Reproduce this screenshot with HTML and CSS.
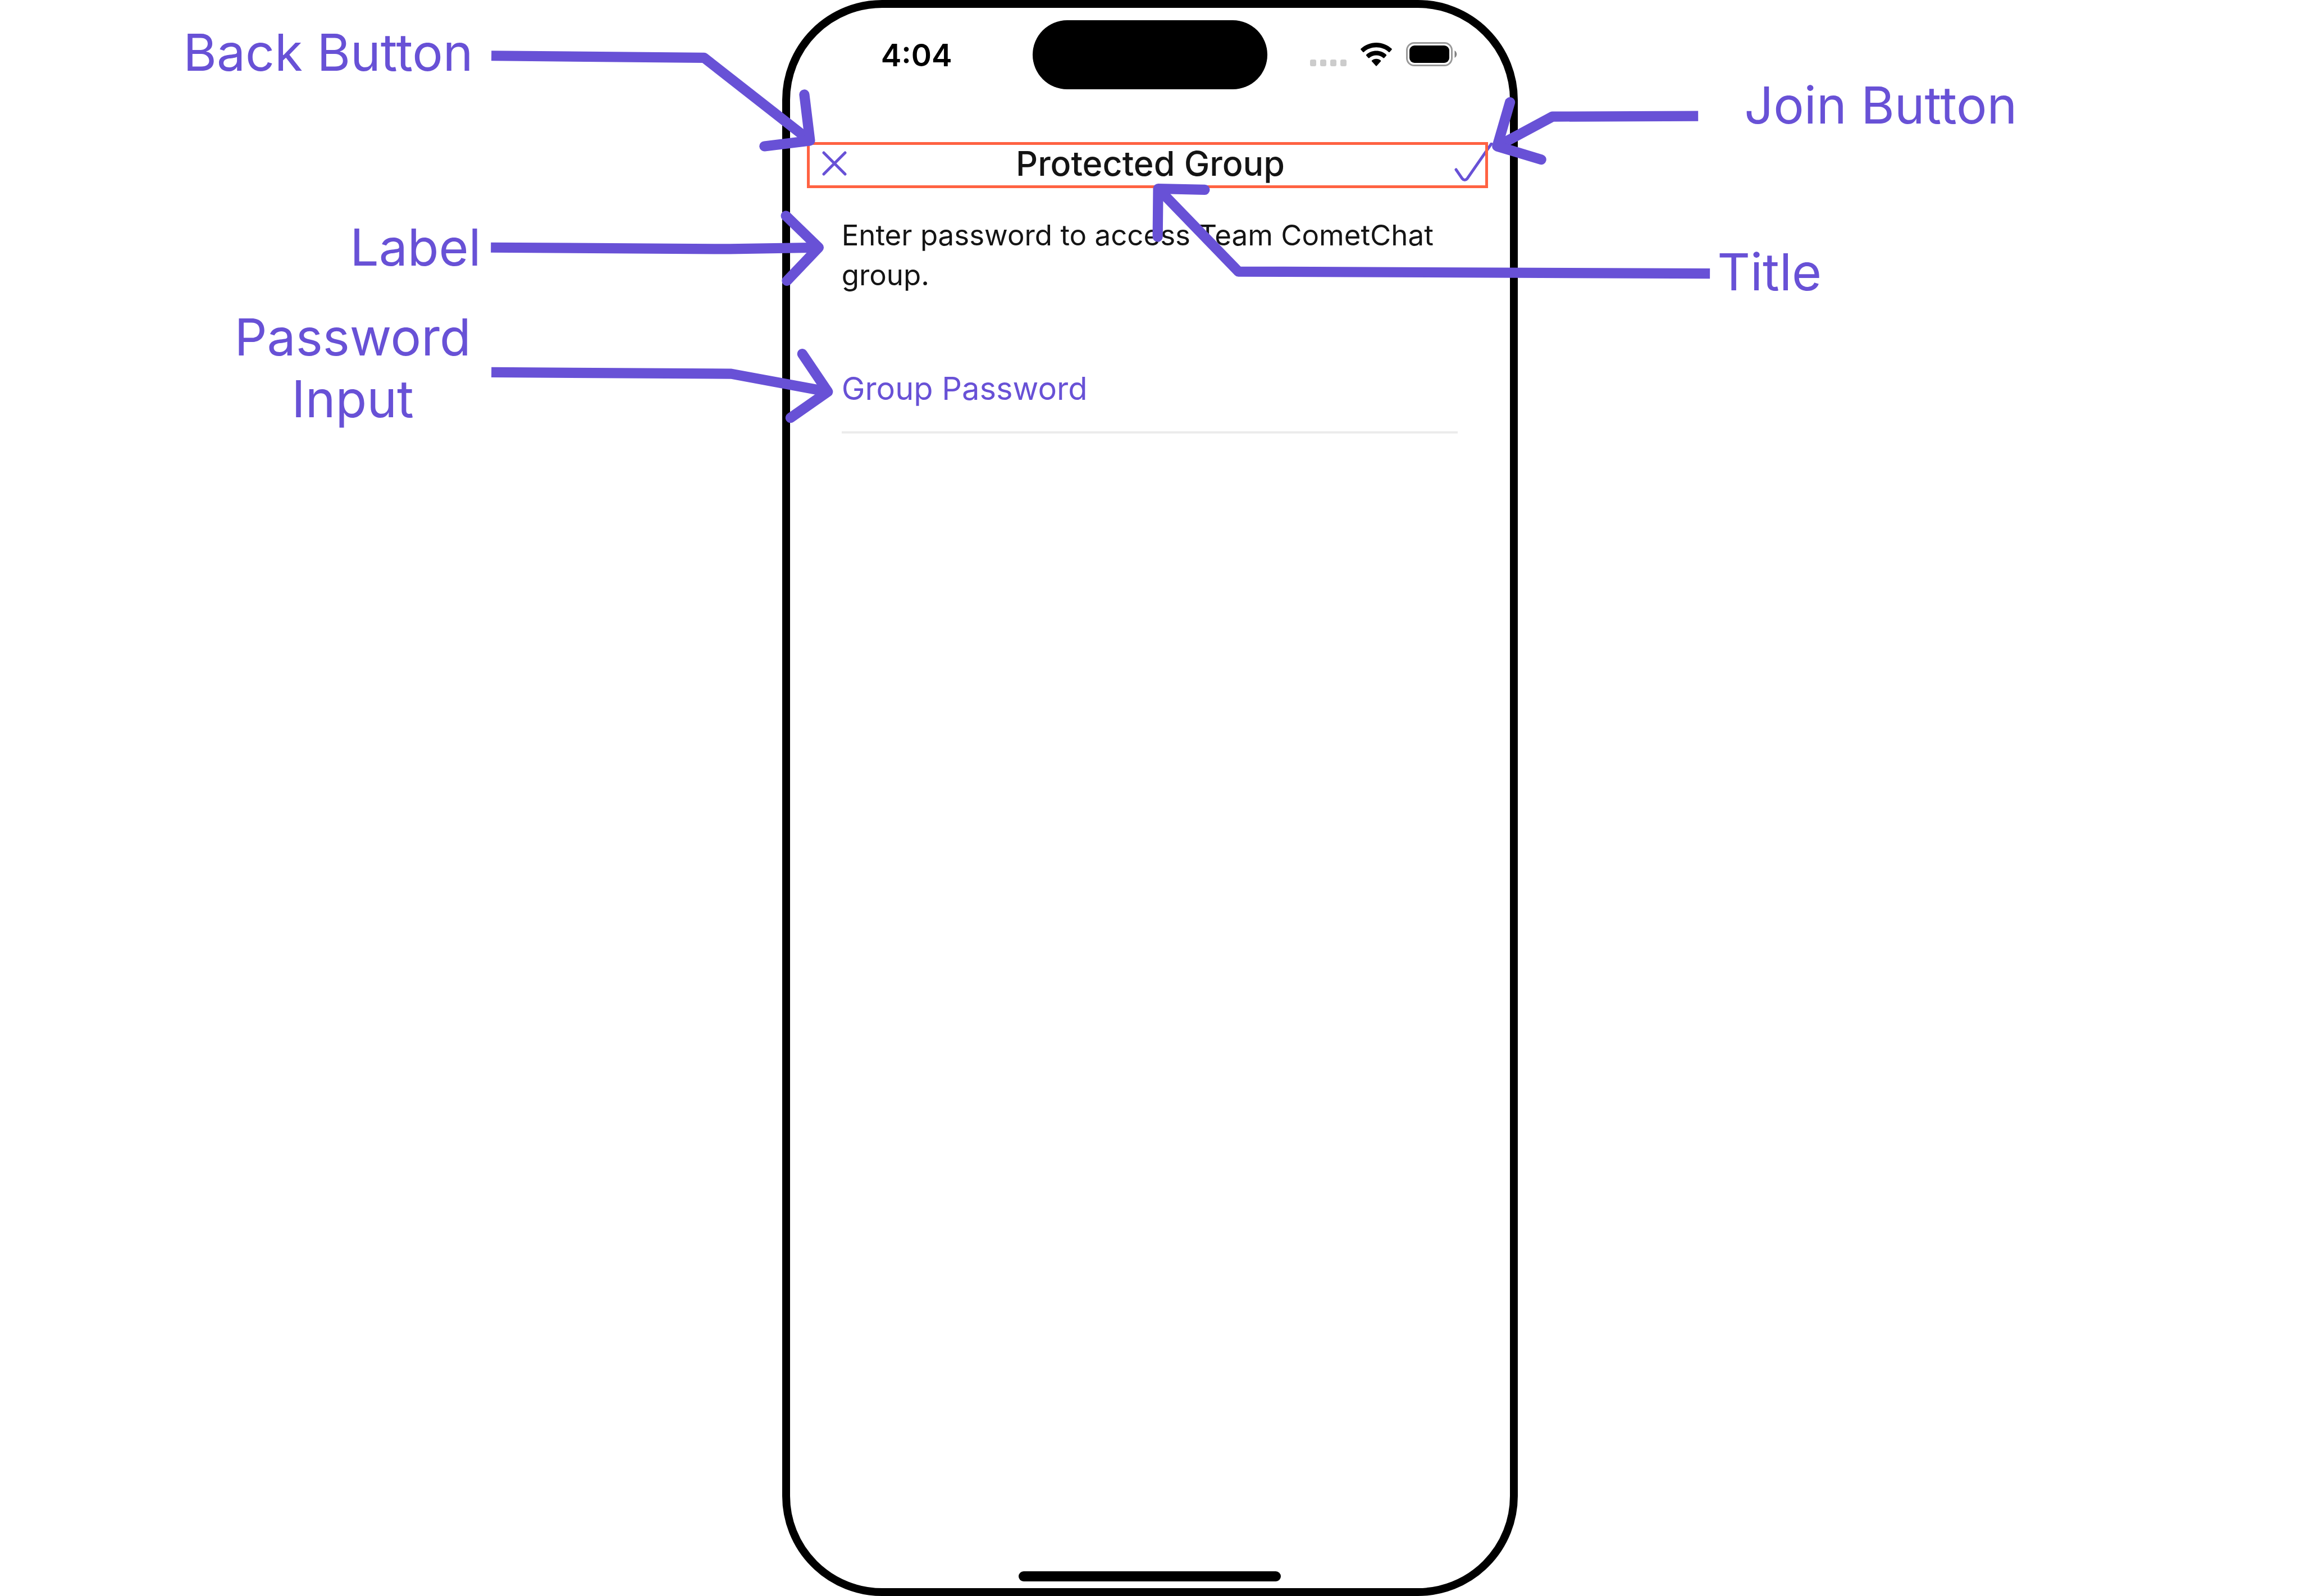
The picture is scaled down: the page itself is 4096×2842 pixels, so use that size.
FILE: index.html
```html
<!DOCTYPE html>
<html lang="en">
<head>
<meta charset="utf-8">
<title>Protected Group</title>
<link rel="stylesheet" href="styles.css">
</head>
<body>
<main class="stage">
  <div class="callouts callouts-left">
    <p class="callout callout-back">Back Button</p>
    <p class="callout callout-label">Label</p>
    <p class="callout callout-password">Password<br>Input</p>
  </div>

  <section class="phone">
    <div class="status">
      <span class="time">4:04</span>
      <span class="island"></span>
      <span class="indicators">
        <span class="signal"><i></i><i></i><i></i><i></i></span>
        <svg class="wifi" viewBox="0 0 56 42" aria-hidden="true">
          <path d="M28 0C17.300 0 7.600 4.100 .500 10.800Q-.200 11.600 .500 12.400L4.300 16.700Q5.100 17.400 5.900 16.700C11.700 11.300 19.500 8.300 28 8.300S44.300 11.300 50.100 16.700Q50.900 17.400 51.700 16.700L55.500 12.400Q56.200 11.600 55.500 10.800C48.400 4.100 38.700 0 28 0Z"/>
          <path d="M28 14.500C21 14.500 14.800 17.100 10.100 21.400Q9.400 22.100 10.100 22.900L13.900 27.200Q14.700 28 15.500 27.200C18.800 24.300 23.200 22.600 28 22.600S37.200 24.300 40.500 27.200Q41.300 28 42.100 27.200L45.900 22.900Q46.600 22.100 45.900 21.400C41.200 17.100 35 14.500 28 14.500Z"/>
          <path d="M28 28.800C24.900 28.800 22.100 29.900 20 31.700Q19.200 32.500 20 33.300L27.200 41.300Q28 42 28.800 41.300L36 33.300Q36.800 32.500 36 31.700C33.900 29.900 31.100 28.800 28 28.800Z"/>
        </svg>
        <svg class="battery" viewBox="0 0 91 43" aria-hidden="true">
          <rect x="1.500" y="1.500" width="80" height="40" rx="13" fill="none" stroke="#999" stroke-width="3"/>
          <rect x="6" y="6" width="71" height="31" rx="9"/>
          <path d="M86.500 15C91.500 18 91.500 25 86.500 28Z" fill="#808080"/>
        </svg>
      </span>
    </div>

    <header class="nav">
      <button class="nav-button nav-back" type="button" aria-label="Back">
        <svg class="icon-close" viewBox="0 0 44 44" aria-hidden="true"><path d="M3 3 41 41M41 3 3 41"/></svg>
      </button>
      <h1 class="nav-title">Protected Group</h1>
      <button class="nav-button nav-join" type="submit" form="join-form" aria-label="Join">
        <svg class="icon-check" viewBox="0 0 70 74" aria-hidden="true"><path d="M4 48 15 64Q19.500 69 24 64L67 2"/></svg>
      </button>
    </header>

    <form class="join-form" id="join-form">
      <label class="prompt" for="group-password">Enter password to access Team CometChat group.</label>
      <input class="password" id="group-password" type="password" placeholder="Group Password">
    </form>

    <span class="home-bar"></span>
  </section>

  <div class="callouts callouts-right">
    <p class="callout callout-join">Join Button</p>
    <p class="callout callout-title">Title</p>
  </div>

  <svg class="arrows" viewBox="0 0 4498 3121" aria-hidden="true">
    <g class="shafts">
      <path d="M961 109 1377 113 1584 275"/>
      <path d="M960 484 1427 487 1601 484"/>
      <path d="M961 728 1430 731 1619 766"/>
      <path d="M3321 227 3036 228 2928 286"/>
      <path d="M3344 535 2422 531 2265 369"/>
    </g>
    <g class="heads">
      <path d="M1573 185 1584 275 1495 286"/>
      <path d="M1537 422 1601 484 1539 549"/>
      <path d="M1569 692 1619 766 1546 817"/>
      <path d="M2953 200 2928 286 3014 312"/>
      <path d="M2356 371 2265 369 2264 463"/>
    </g>
  </svg>
</main>
</body>
</html>
```

FILE: styles.css
```css
:root {
  --accent: #6851d6;
  --frame: #ff6242;
  --ink: #141414;
}

* {
  box-sizing: border-box;
}

body {
  margin: 0;
  background: #fff;
  color: var(--ink);
  font-family: Inter, "Liberation Sans", sans-serif;
}

.stage {
  position: relative;
  display: grid;
  grid-template-columns: 34% 32% 34%;
  min-height: 100vh;
}

/* Annotations beside the phone */
.callouts {
  display: flex;
  flex-direction: column;
}

.callouts-left {
  align-items: flex-end;
  padding: 38px 536px 0 0;
}

.callouts-right {
  align-items: flex-start;
  padding: 132px 0 0 355px;
}

.callout {
  margin: 0;
  color: var(--accent);
  font-size: 91px;
  line-height: 110px;
  text-align: center;
  white-space: nowrap;
}

.callout-back {
  margin-right: 14px;
}

.callout-label {
  margin-top: 237px;
}

.callout-password {
  margin-top: 50px;
  margin-right: 18px;
}

.callout-join {
  margin-left: 48px;
}

.callout-title {
  margin-top: 187px;
}

/* Phone */
.phone {
  display: flex;
  flex-direction: column;
  border: 14px solid #000;
  border-radius: 178px;
  padding: 22px 0 12px;
}

.status {
  display: grid;
  grid-template-columns: 1fr 418px 1fr;
  align-items: center;
  color: #000;
}

.time {
  padding-left: 162px;
  font-size: 55px;
  font-weight: 600;
  line-height: 66px;
}

.island {
  height: 123px;
  border-radius: 62px;
  background: #000;
}

.indicators {
  display: flex;
  justify-content: flex-end;
  align-items: flex-end;
  gap: 25px;
  padding: 0 94px 2px 0;
}

.signal {
  display: flex;
  gap: 7px;
}

.signal i {
  width: 11px;
  height: 12px;
  border-radius: 3px;
  background: #ccc;
}

.wifi {
  width: 56px;
  height: 42px;
}

.battery {
  width: 91px;
  height: 43px;
}

.nav {
  position: relative;
  display: grid;
  grid-template-columns: 1fr auto 1fr;
  align-items: center;
  height: 82px;
  margin: 94px 39px 0 30px;
  padding: 0 17px 6px 27px;
}

/* The frame runs over the join icon */
.nav::after {
  content: "";
  position: absolute;
  inset: 0;
  border: 5px solid var(--frame);
  pointer-events: none;
}

.nav-button {
  display: flex;
  padding: 0;
  border: 0;
  background: none;
}

.nav-button path {
  fill: none;
  stroke: var(--accent);
  stroke-width: 5;
  stroke-linecap: round;
}

.nav-back {
  justify-self: start;
}

.nav-join {
  justify-self: end;
  margin-right: -26px;
}

.icon-close {
  width: 44px;
  height: 44px;
}

.icon-check {
  width: 70px;
  height: 74px;
}

.nav-title {
  margin: 0;
  font-size: 61px;
  font-weight: 500;
  line-height: 74px;
}

.join-form {
  display: flex;
  flex-direction: column;
  padding: 48px 93px 0 92px;
}

.prompt {
  font-size: 51px;
  line-height: 71px;
}

.password {
  width: 100%;
  height: 120px;
  margin-top: 127px;
  padding: 0 0 36px;
  border: 0;
  border-bottom: 4px solid #ececec;
  background: none;
  color: var(--accent);
  font-family: inherit;
  font-size: 56px;
  outline: 0;
}

.password::placeholder {
  color: var(--accent);
  opacity: 1;
}

.home-bar {
  align-self: center;
  width: 467px;
  height: 18px;
  margin-top: auto;
  border-radius: 9px;
  background: #000;
}

/* Arrows over everything */
.arrows {
  position: absolute;
  top: 0;
  left: 0;
  width: 100%;
  pointer-events: none;
}

.arrows path {
  fill: none;
  stroke: var(--accent);
  stroke-width: 20;
  stroke-linejoin: round;
}

.heads path {
  stroke-linecap: round;
}
```
